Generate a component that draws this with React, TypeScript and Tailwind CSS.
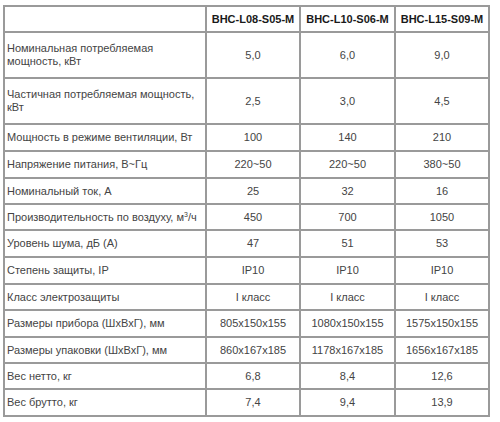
const MODELS = ["BHC-L08-S05-M", "BHC-L10-S06-M", "BHC-L15-S09-M"];

type Row = { label: React.ReactNode; values: string[]; h: string };

const ROWS: Row[] = [
  {
    label: (
      <>
        Номинальная потребляемая
        <br />
        мощность, кВт
      </>
    ),
    values: ["5,0", "6,0", "9,0"],
    h: "h-[46px]",
  },
  {
    label: (
      <>
        Частичная потребляемая мощность,
        <br />
        кВт
      </>
    ),
    values: ["2,5", "3,0", "4,5"],
    h: "h-[46px]",
  },
  { label: "Мощность в режиме вентиляции, Вт", values: ["100", "140", "210"], h: "h-[27px]" },
  { label: "Напряжение питания, В~Гц", values: ["220~50", "220~50", "380~50"], h: "h-[27px]" },
  { label: "Номинальный ток, А", values: ["25", "32", "16"], h: "h-[26px]" },
  {
    label: (
      <>
        Производительность по воздуху, м<sup className="text-[7px]">3</sup>/ч
      </>
    ),
    values: ["450", "700", "1050"],
    h: "h-[26px]",
  },
  { label: "Уровень шума, дБ (А)", values: ["47", "51", "53"], h: "h-[27px]" },
  { label: "Степень защиты, IP", values: ["IP10", "IP10", "IP10"], h: "h-[27px]" },
  { label: "Класс электрозащиты", values: ["I класс", "I класс", "I класс"], h: "h-[26px]" },
  {
    label: "Размеры прибора (ШхВхГ), мм",
    values: ["805x150x155", "1080x150x155", "1575x150x155"],
    h: "h-[27px]",
  },
  {
    label: "Размеры упаковки (ШхВхГ), мм",
    values: ["860x167x185", "1178x167x185", "1656x167x185"],
    h: "h-[26px]",
  },
  { label: "Вес нетто, кг", values: ["6,8", "8,4", "12,6"], h: "h-[26px]" },
  { label: "Вес брутто, кг", values: ["7,4", "9,4", "13,9"], h: "h-[27px]" },
];

export default function App() {
  return (
    <div className="w-[500px] h-[422px] bg-white pt-[5px] pl-[3px] font-['Liberation_Sans',Arial,sans-serif] text-[11px] leading-[13px] text-[#444]">
      <table className="border-collapse table-fixed w-[487px]">
        <colgroup>
          <col className="w-[202px]" />
          <col className="w-[94px]" />
          <col className="w-[95px]" />
          <col className="w-[94px]" />
        </colgroup>
        <thead>
          <tr className="h-[26px]">
            <th className="border-2 border-[#9a9a9a]" />
            {MODELS.map((m) => (
              <th
                key={m}
                className="border-2 border-[#9a9a9a] font-bold text-[#1a1a1a] text-center align-middle"
              >
                {m}
              </th>
            ))}
          </tr>
        </thead>
        <tbody>
          {ROWS.map((row, i) => (
            <tr key={i} className={row.h}>
              <td className="border-2 border-[#9a9a9a] pl-[2px] align-middle">
                {row.label}
              </td>
              {row.values.map((v, j) => (
                <td
                  key={j}
                  className="border-2 border-[#9a9a9a] text-center align-middle"
                >
                  {v}
                </td>
              ))}
            </tr>
          ))}
        </tbody>
      </table>
    </div>
  );
}
